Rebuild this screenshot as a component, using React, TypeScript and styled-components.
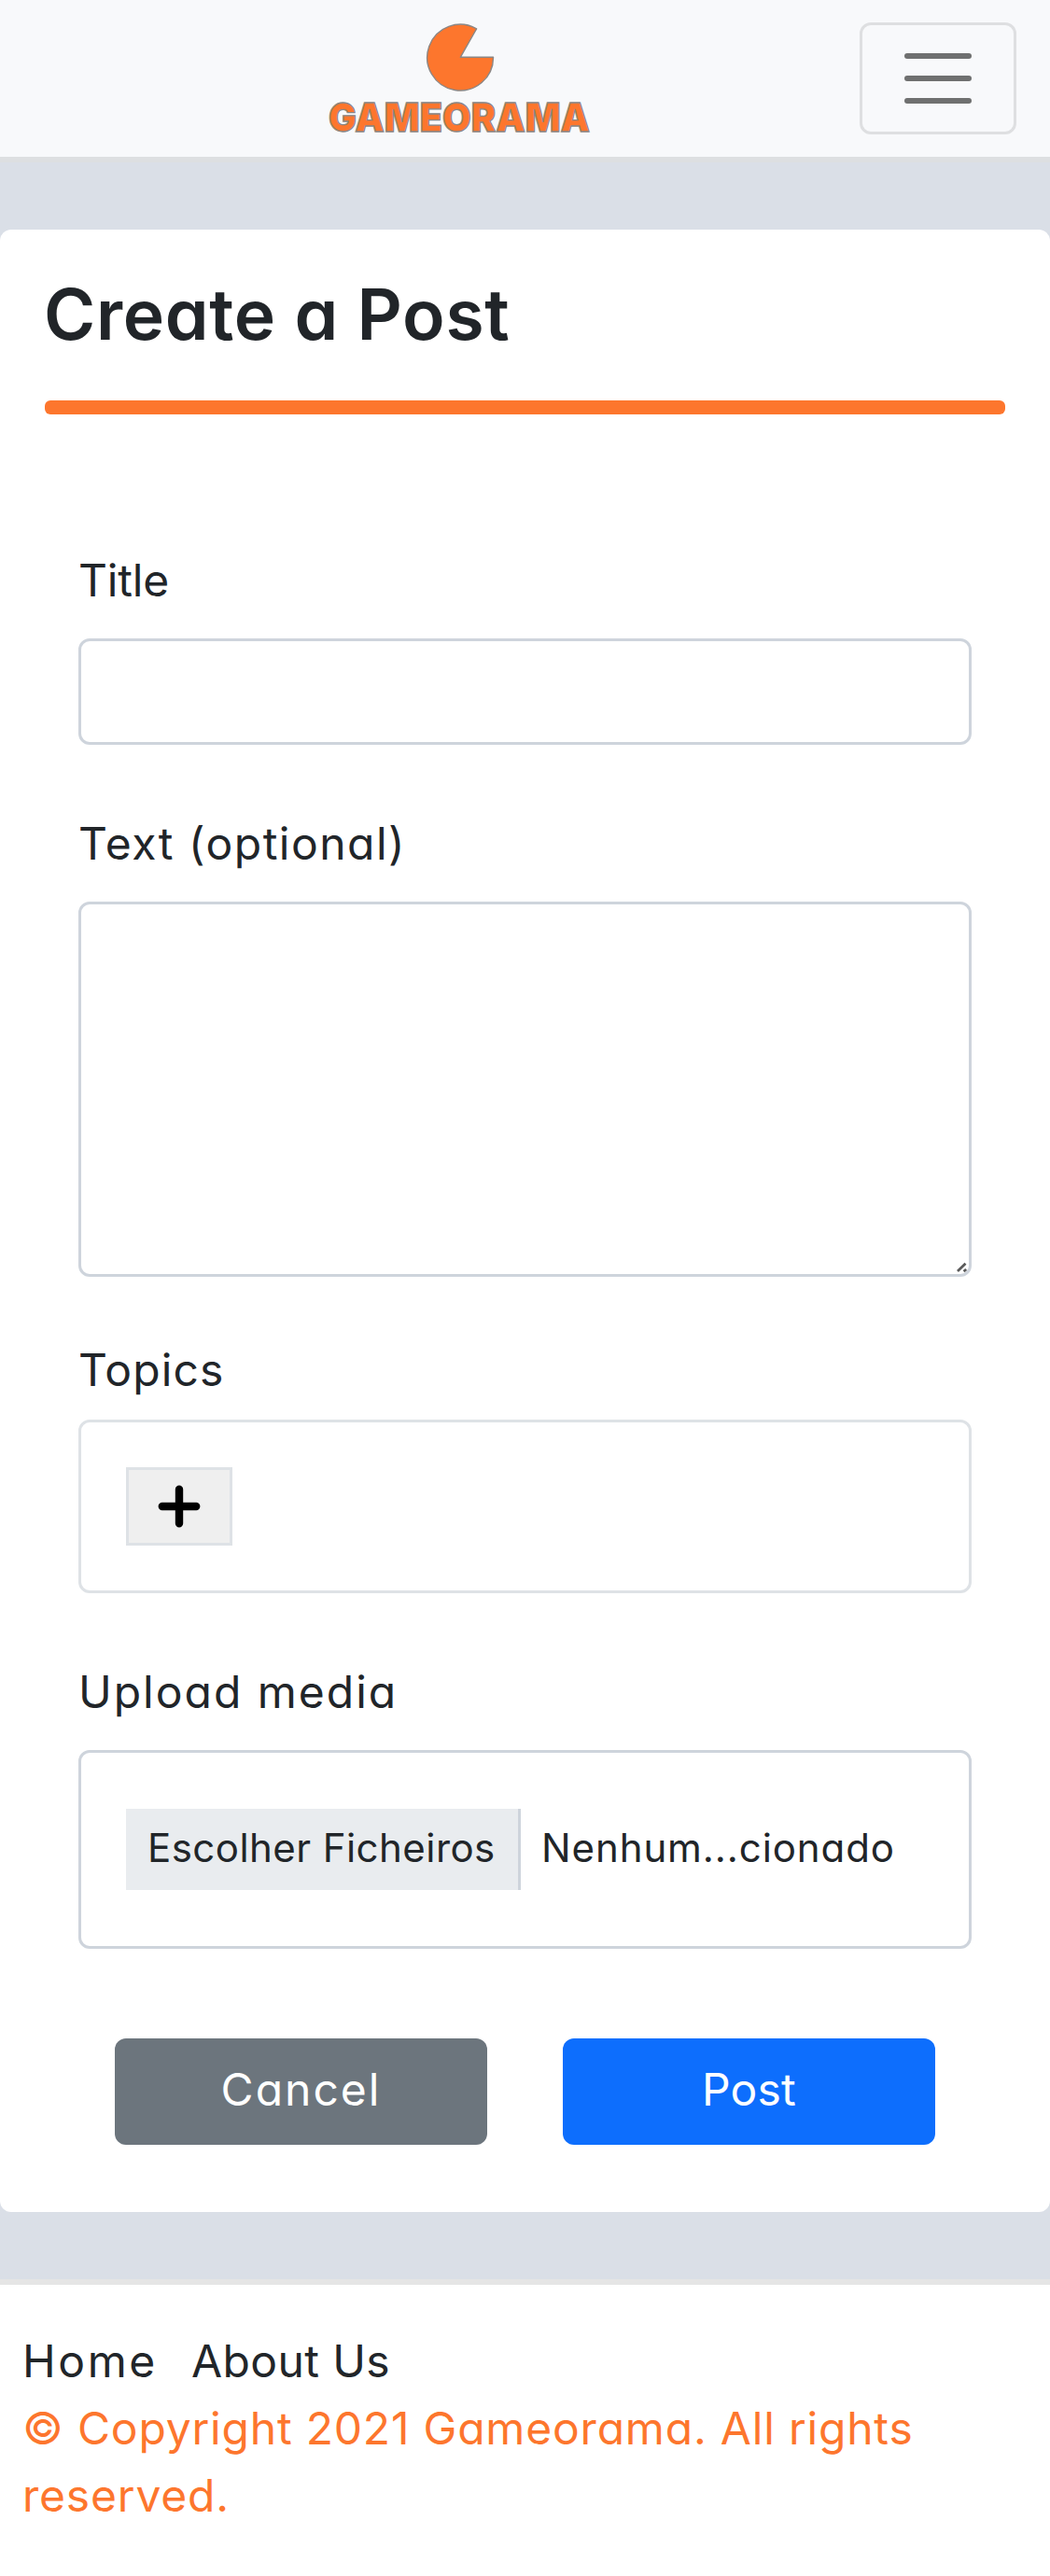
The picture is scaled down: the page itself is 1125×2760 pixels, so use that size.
import React from 'react';
import styled, { createGlobalStyle } from 'styled-components';

const orange = '#fd762d';
const ink = '#212529';

const GlobalStyle = createGlobalStyle`
  *, *::before, *::after { box-sizing: border-box; }
  body {
    margin: 0;
    background: #dadfe7;
    color: ${ink};
    font-family: Inter, 'Open Sans', sans-serif;
    font-feature-settings: 'cv11' 1;
    font-size: 48px;
    line-height: 72px;
  }
  button, input, textarea { font: inherit; font-feature-settings: inherit; }
`;

const Header = styled.header`
  display: flex;
  justify-content: space-between;
  align-items: center;
  height: 174px;
  padding: 0 36px 0 342px;
  background: #f8f9fb;
  border-bottom: 6px solid #dddfe1;
`;

const LogoLink = styled.a`
  display: block;
  height: 120px;
`;

const Wordmark = styled.text`
  font: 900 43px Inter, sans-serif;
  fill: ${orange};
  stroke: #8b8684;
  stroke-width: 1.3px;
`;

const Toggler = styled.button`
  display: flex;
  flex-direction: column;
  align-items: center;
  justify-content: center;
  gap: 18px;
  width: 168px;
  height: 120px;
  padding: 0;
  background: transparent;
  border: 3px solid #dedfe1;
  border-radius: 12px;
`;

const TogglerBar = styled.span`
  width: 72px;
  height: 6px;
  border-radius: 3px;
  background: #6f7070;
`;

const Main = styled.main`
  padding: 72px 0;
`;

const Card = styled.section`
  padding: 48px 48px 72px;
  background: #fff;
  border-radius: 12px;
`;

const Heading = styled.h1`
  margin: 0 0 0 -1px;
  font-size: 75px;
  font-weight: 600;
  line-height: 86px;
  letter-spacing: 0.7px;
`;

const Divider = styled.hr`
  height: 15px;
  margin: 49px 0 144px;
  border: 0;
  border-radius: 6px;
  background: ${orange};
`;

const Form = styled.form`
  display: flex;
  flex-direction: column;
  padding: 0 36px;
`;

const Field = styled.div<{ $after: number; $gap?: number }>`
  display: flex;
  flex-direction: column;
  gap: ${p => p.$gap ?? 24}px;
  margin-bottom: ${p => p.$after}px;
`;

const Label = styled.label<{ $spacing: number }>`
  height: 72px;
  line-height: 67px;
  letter-spacing: ${p => p.$spacing}px;
`;

const TextInput = styled.input`
  width: 100%;
  height: 114px;
  padding: 18px 36px;
  background: #fff;
  border: 3px solid #ced4dc;
  border-radius: 12px;
`;

const TextAreaWrap = styled.div`
  position: relative;
`;

const TextArea = styled.textarea`
  display: block;
  width: 100%;
  height: 402px;
  padding: 18px 36px;
  background: #fff;
  border: 3px solid #ced4dc;
  border-radius: 12px;
  resize: none;
`;

const ResizeGrip = styled.svg`
  position: absolute;
  right: 4px;
  bottom: 4px;
  pointer-events: none;
`;

const TopicBox = styled.div`
  display: flex;
  align-items: center;
  height: 186px;
  padding: 0 48px;
  border: 3px solid #dee2e6;
  border-radius: 12px;
`;

const AddButton = styled.button`
  display: flex;
  align-items: center;
  justify-content: center;
  width: 114px;
  height: 84px;
  padding: 0;
  background: #efefef;
  border: 3px solid #dee2e6;
`;

const FileBox = styled.div`
  display: flex;
  align-items: center;
  height: 213px;
  padding: 0 48px;
  border: 3px solid #ced4dc;
  border-radius: 12px;
  font-size: 42px;
`;

const FileButton = styled.span`
  width: 423px;
  height: 87px;
  padding-left: 23px;
  line-height: 84px;
  letter-spacing: 0.45px;
  white-space: nowrap;
  background: #e9ecef;
  border-right: 3px solid #ced4dc;
`;

const FileName = styled.span`
  padding-left: 22px;
  height: 87px;
  line-height: 84px;
  letter-spacing: 0.9px;
  white-space: nowrap;
`;

const Actions = styled.div`
  display: flex;
  justify-content: space-between;
  padding: 0 39px;
`;

const ActionButton = styled.button<{ $color: string; $spacing: number }>`
  width: 399px;
  height: 114px;
  padding: 0 0 4px;
  color: #fff;
  background: ${p => p.$color};
  border: 0;
  border-radius: 12px;
  letter-spacing: ${p => p.$spacing}px;
`;

const Footer = styled.footer`
  height: 318px;
  padding: 46px 24px 0;
  background: #fff;
  border-top: 6px solid #e5e5e5;
`;

const FooterLinks = styled.nav`
  display: flex;
  gap: 36px;
`;

const FooterLink = styled.a<{ $spacing: number }>`
  color: ${ink};
  letter-spacing: ${p => p.$spacing}px;
`;

const Copyright = styled.p`
  margin: 0;
  color: ${orange};
  letter-spacing: 0.8px;
`;

function Logo() {
  return (
    <svg width="300" height="120" viewBox="342 24 300 120" overflow="visible">
      <path
        d="M493.3 61.3 H528.5 A35.4 35.4 0 1 1 510.6 30.8 Z"
        fill={orange}
        stroke="#8b8684"
        strokeWidth="1.4"
        strokeLinejoin="round"
      />
      <Wordmark x="352" y="141" textLength="280" lengthAdjust="spacingAndGlyphs">
        GAMEORAMA
      </Wordmark>
    </svg>
  );
}

function PlusIcon() {
  return (
    <svg width="46" height="46" viewBox="0 0 46 46">
      <path d="M23 4.8V41.2M4.8 23H41.2" stroke="#000" strokeWidth="8.4" strokeLinecap="round" />
    </svg>
  );
}

export default function App() {
  return (
    <>
      <GlobalStyle />
      <Header>
        <LogoLink aria-label="Gameorama">
          <Logo />
        </LogoLink>
        <Toggler aria-label="Menu">
          <TogglerBar />
          <TogglerBar />
          <TogglerBar />
        </Toggler>
      </Header>
      <Main>
        <Card>
          <Heading>Create a Post</Heading>
          <Divider />
          <Form onSubmit={e => e.preventDefault()}>
            <Field $after={72}>
              <Label htmlFor="title" $spacing={-0.2}>Title</Label>
              <TextInput id="title" />
            </Field>
            <Field $after={66}>
              <Label htmlFor="text" $spacing={1.5}>Text (optional)</Label>
              <TextAreaWrap>
                <TextArea id="text" />
                <ResizeGrip width="13" height="13" viewBox="0 0 13 13">
                  <path d="M2 11L10.5 2.8M8.6 11.3L11.2 9" stroke="#5a5a5a" strokeWidth="2.8" />
                </ResizeGrip>
              </TextAreaWrap>
            </Field>
            <Field $after={72} $gap={15}>
              <Label $spacing={1.1}>Topics</Label>
              <TopicBox>
                <AddButton type="button" aria-label="Add">
                  <PlusIcon />
                </AddButton>
              </TopicBox>
            </Field>
            <Field $after={96}>
              <Label $spacing={2}>Upload media</Label>
              <FileBox>
                <FileButton>Escolher Ficheiros</FileButton>
                <FileName>Nenhum...cionado</FileName>
              </FileBox>
            </Field>
            <Actions>
              <ActionButton type="button" $color="#6c757d" $spacing={2}>Cancel</ActionButton>
              <ActionButton type="submit" $color="#0d6efd" $spacing={0.2}>Post</ActionButton>
            </Actions>
          </Form>
        </Card>
      </Main>
      <Footer>
        <FooterLinks>
          <FooterLink $spacing={2.6}>Home</FooterLink>
          <FooterLink $spacing={0.4}>About Us</FooterLink>
        </FooterLinks>
        <Copyright>© Copyright 2021 Gameorama. All rights reserved.</Copyright>
      </Footer>
    </>
  );
}
